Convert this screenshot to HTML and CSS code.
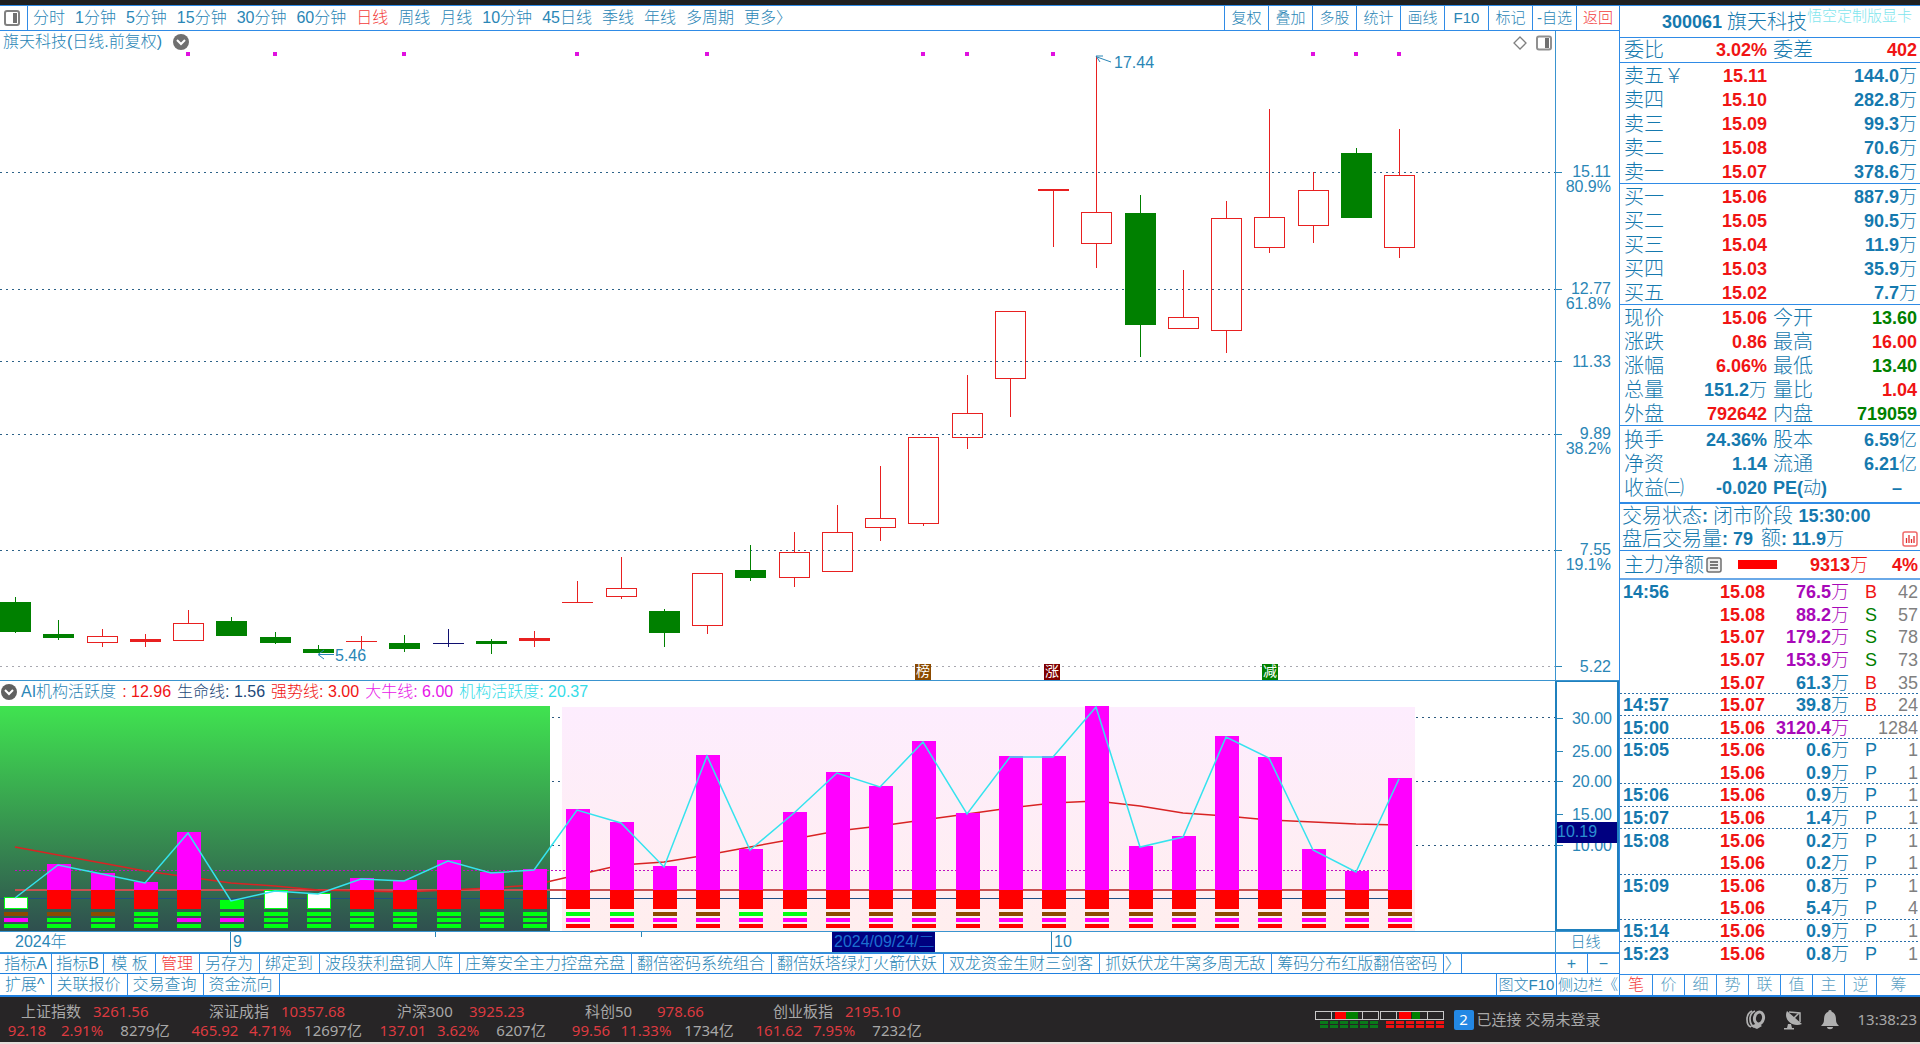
FILE: index.html
```html
<!DOCTYPE html>
<html lang="zh-CN">
<head>
<meta charset="utf-8">
<title>300061 旗天科技 日线</title>
<link rel="stylesheet" href="styles.css">
</head>
<body>
<div class="window-edge"></div>
<main class="workspace">
  <section class="chart-side">
    <nav class="toolbar">
      <button class="panel-toggle" aria-label="侧栏"><svg width="16" height="16" viewBox="0 0 16 16"><rect x="1" y="1" width="14" height="14" rx="2" fill="#fff" stroke="#808080" stroke-width="2"/><rect x="9" y="3" width="4" height="10" fill="#707070"/></svg></button>
      <div class="periods">
        <button>分时</button><button>1分钟</button><button>5分钟</button><button>15分钟</button><button>30分钟</button><button>60分钟</button><button class="active">日线</button><button>周线</button><button>月线</button><button>10分钟</button><button>45日线</button><button>季线</button><button>年线</button><button>多周期</button><button>更多〉</button>
      </div>
      <div class="tools">
        <button>复权</button><button>叠加</button><button>多股</button><button>统计</button><button>画线</button><button>F10</button><button>标记</button><button>-自选</button><button class="active">返回</button>
      </div>
    </nav>

    <div class="pane price-pane">
      <div class="plot">
        <svg id="price" class="canvas" viewBox="0 0 1555 649" preserveAspectRatio="none"></svg>
        <div id="price-notes"></div>
        <div class="plot-title">旗天科技(日线.前复权)
          <svg width="16" height="16" viewBox="0 0 16 16"><circle cx="8" cy="8" r="8" fill="#707070"/><path d="M4 6l4 4 4-4" fill="none" stroke="#fff" stroke-width="2"/></svg>
        </div>
        <div class="plot-icons">
          <svg width="14" height="16" viewBox="0 0 14 16"><path d="M7 2l6 6-6 6-6-6z" fill="none" stroke="#808080" stroke-width="1.3"/></svg>
          <svg width="16" height="16" viewBox="0 0 16 16"><rect x="1" y="1.500" width="14" height="13" rx="2" fill="#fff" stroke="#909090" stroke-width="2"/><rect x="9" y="3" width="4" height="10" fill="#707070"/></svg>
        </div>
      </div>
      <div class="axis" id="price-axis"></div>
    </div>

    <div class="pane indicator-pane">
      <div class="plot">
        <svg id="indicator" class="canvas" viewBox="0 0 1555 250" preserveAspectRatio="none"></svg>
        <div class="legend">
          <svg width="16" height="16" viewBox="0 0 16 16"><circle cx="8" cy="8" r="8" fill="#606060"/><path d="M4 6l4 4 4-4" fill="none" stroke="#fff" stroke-width="2"/></svg>
          <span>AI机构活跃度</span><span class="red">: 12.96</span><span class="navy">生命线: 1.56</span><span class="red">强势线: 3.00</span><span class="magenta">大牛线: 6.00</span><span class="cyan">机构活跃度: 20.37</span>
        </div>
      </div>
      <div class="axis boxed" id="indicator-axis"></div>
    </div>

    <div class="pane date-pane">
      <div class="plot" id="dates"></div>
      <div class="axis cycle">日线</div>
    </div>

    <div class="tabs">
      <button class="short">指标A</button><button class="short">指标B</button><button class="short">模 板</button><button class="active">管理</button><button>另存为</button><button>绑定到</button><button>波段获利盘铜人阵</button><button>庄筹安全主力控盘充盘</button><button>翻倍密码系统组合</button><button>翻倍妖塔绿灯火箭伏妖</button><button>双龙资金生财三剑客</button><button>抓妖伏龙牛窝多周无敌</button><button>筹码分布红版翻倍密码</button><button class="next">〉</button>
      <span class="zoomers"><button>+</button><button>−</button></span>
    </div>
    <div class="tabs extra">
      <button>扩展^</button><button>关联报价</button><button>交易查询</button><button>资金流向</button>
      <span class="sides"><button>图文F10</button><button>侧边栏《</button></span>
    </div>
  </section>

  <aside class="quote">
    <header class="stock"><b>300061</b><span class="name">旗天科技</span><span class="mark">悟空定制版显卡</span></header>
    <table class="book single"><tr><th>委比</th><td class="red">3.02%</td><th>委差</th><td class="red">402</td></tr></table>
    <table class="book">
      <tr><th>卖五￥</th><td class="red">15.11</td><td colspan="2">144.0<i>万</i></td></tr>
      <tr><th>卖四</th><td class="red">15.10</td><td colspan="2">282.8<i>万</i></td></tr>
      <tr><th>卖三</th><td class="red">15.09</td><td colspan="2">99.3<i>万</i></td></tr>
      <tr><th>卖二</th><td class="red">15.08</td><td colspan="2">70.6<i>万</i></td></tr>
      <tr><th>卖一</th><td class="red">15.07</td><td colspan="2">378.6<i>万</i></td></tr>
    </table>
    <table class="book">
      <tr><th>买一</th><td class="red">15.06</td><td colspan="2">887.9<i>万</i></td></tr>
      <tr><th>买二</th><td class="red">15.05</td><td colspan="2">90.5<i>万</i></td></tr>
      <tr><th>买三</th><td class="red">15.04</td><td colspan="2">11.9<i>万</i></td></tr>
      <tr><th>买四</th><td class="red">15.03</td><td colspan="2">35.9<i>万</i></td></tr>
      <tr><th>买五</th><td class="red">15.02</td><td colspan="2">7.7<i>万</i></td></tr>
    </table>
    <table class="book">
      <tr><th>现价</th><td class="red">15.06</td><th>今开</th><td class="green">13.60</td></tr>
      <tr><th>涨跌</th><td class="red">0.86</td><th>最高</th><td class="red">16.00</td></tr>
      <tr><th>涨幅</th><td class="red">6.06%</td><th>最低</th><td class="green">13.40</td></tr>
      <tr><th>总量</th><td>151.2<i>万</i></td><th>量比</th><td class="red">1.04</td></tr>
      <tr><th>外盘</th><td class="red">792642</td><th>内盘</th><td class="green">719059</td></tr>
    </table>
    <table class="book tall">
      <tr><th>换手</th><td>24.36%</td><th>股本</th><td>6.59<i>亿</i></td></tr>
      <tr><th>净资</th><td>1.14</td><th>流通</th><td>6.21<i>亿</i></td></tr>
      <tr><th>收益㈡</th><td>-0.020</td><th class="pe">PE(<i>动</i>)</th><td class="none">–</td></tr>
    </table>
    <div class="session">
      <p>交易状态<b>: </b>闭市阶段 <b>15:30:00</b></p>
      <p>盘后交易量<b>: 79</b><span class="amount">额<b>: 11.9</b><i>万</i></span>
        <svg width="16" height="16" viewBox="0 0 16 16"><rect x="1" y="1" width="14" height="14" rx="2" fill="none" stroke="#f06a6a" stroke-width="1.5"/><path d="M4.500 12V7M7 12V4M9.500 12V8M12 12V5" stroke="#e03030" stroke-width="1.300"/></svg></p>
    </div>
    <div class="netflow">
      <span class="label">主力净额</span>
      <svg width="16" height="16" viewBox="0 0 16 16"><rect x="1" y="1" width="14" height="14" rx="2" fill="#eee" stroke="#707070" stroke-width="1.500"/><path d="M4 5h8M4 8h8M4 11h8" stroke="#505050" stroke-width="1.500"/></svg>
      <span class="bar"></span><b class="flow">9313<i>万</i></b><b class="pct">4%</b>
    </div>
    <table class="ticks">
      <tr><td>14:56</td><td>15.08</td><td class="big">76.5<i>万</i></td><td class="red">B</td><td>42</td></tr>
      <tr><td></td><td>15.08</td><td class="big">88.2<i>万</i></td><td class="green">S</td><td>57</td></tr>
      <tr><td></td><td>15.07</td><td class="big">179.2<i>万</i></td><td class="green">S</td><td>78</td></tr>
      <tr><td></td><td>15.07</td><td class="big">153.9<i>万</i></td><td class="green">S</td><td>73</td></tr>
      <tr><td></td><td>15.07</td><td>61.3<i>万</i></td><td class="red">B</td><td>35</td></tr>
      <tr class="cut"><td>14:57</td><td>15.07</td><td>39.8<i>万</i></td><td class="red">B</td><td>24</td></tr>
      <tr class="cut"><td>15:00</td><td>15.06</td><td class="big">3120.4<i>万</i></td><td></td><td>1284</td></tr>
      <tr class="cut"><td>15:05</td><td>15.06</td><td>0.6<i>万</i></td><td>P</td><td>1</td></tr>
      <tr><td></td><td>15.06</td><td>0.9<i>万</i></td><td>P</td><td>1</td></tr>
      <tr class="cut"><td>15:06</td><td>15.06</td><td>0.9<i>万</i></td><td>P</td><td>1</td></tr>
      <tr class="cut"><td>15:07</td><td>15.06</td><td>1.4<i>万</i></td><td>P</td><td>1</td></tr>
      <tr class="cut"><td>15:08</td><td>15.06</td><td>0.2<i>万</i></td><td>P</td><td>1</td></tr>
      <tr><td></td><td>15.06</td><td>0.2<i>万</i></td><td>P</td><td>1</td></tr>
      <tr class="cut"><td>15:09</td><td>15.06</td><td>0.8<i>万</i></td><td>P</td><td>1</td></tr>
      <tr><td></td><td>15.06</td><td>5.4<i>万</i></td><td>P</td><td>4</td></tr>
      <tr class="cut"><td>15:14</td><td>15.06</td><td>0.9<i>万</i></td><td>P</td><td>1</td></tr>
      <tr class="cut"><td>15:23</td><td>15.06</td><td>0.8<i>万</i></td><td>P</td><td>1</td></tr>
    </table>
    <div class="views">
      <button class="active">笔</button><button>价</button><button>细</button><button>势</button><button>联</button><button>值</button><button>主</button><button>逆</button><button>筹</button>
    </div>
  </aside>
</main>

<footer class="status">
  <div class="index"><span class="title">上证指数</span><em class="last">3261.56</em><em>92.18</em><em>2.91%</em><span>8279亿</span></div>
  <div class="index"><span class="title">深证成指</span><em class="last">10357.68</em><em>465.92</em><em>4.71%</em><span>12697亿</span></div>
  <div class="index"><span class="title">沪深300</span><em class="last">3925.23</em><em>137.01</em><em>3.62%</em><span>6207亿</span></div>
  <div class="index"><span class="title">科创50</span><em class="last">978.66</em><em>99.56</em><em>11.33%</em><span>1734亿</span></div>
  <div class="index"><span class="title">创业板指</span><em class="last">2195.10</em><em>161.62</em><em>7.95%</em><span>7232亿</span></div>
  <div class="link">
    <svg width="130" height="20" viewBox="0 0 130 20" shape-rendering="crispEdges">
      <rect x="20" y="2" width="11" height="7" fill="#f00"/><rect x="31" y="2" width="12" height="7" fill="#008000"/>
      <path d="M.5 1.500h63v8H.5zM16 2v7M47.500 2v7" fill="none" stroke="#c8c8c8"/>
      <rect x="84" y="2" width="12" height="7" fill="#f00"/><rect x="97" y="2" width="8" height="7" fill="#008000"/>
      <path d="M65.500 1.500h63v8h-63zM81 2v7M112.500 2v7" fill="none" stroke="#c8c8c8"/>
      <path d="M5 12.500h59M5 16.500h59" stroke="#0a7a1a" stroke-width="3" stroke-dasharray="8 2"/>
      <path d="M71 12.500h58M71 16.500h58" stroke="#f01010" stroke-width="3" stroke-dasharray="8 2"/>
    </svg>
    <span class="count">2</span><span>已连接 交易未登录</span>
  </div>
  <div class="tray">
    <svg width="20" height="20" viewBox="0 0 20 20"><path d="M6 1C-1 4 0 15 5 17M9 1C2 4 3 14 8 17" fill="none" stroke="#b0b0b0" stroke-width="1.700"/><ellipse cx="13" cy="8" rx="4.500" ry="6" transform="rotate(12 13 8)" fill="none" stroke="#b0b0b0" stroke-width="3"/><path d="M4 16l7 3 5-3-4-3z" fill="#b0b0b0"/></svg>
    <svg width="20" height="20" viewBox="0 0 20 20"><path d="M4 1c-4 8 5 17 15 13zM5 14l3 0 1 4h2v1.500H1V18h3z" fill="#b0b0b0"/><path d="M11 8l5-5M6 2l11 1v9" fill="none" stroke="#b0b0b0" stroke-width="1.500"/></svg>
    <svg width="20" height="20" viewBox="0 0 20 20"><path d="M10 0c1.200 0 1.700 1 1.700 1.800C15.500 3 16 7 16 10c0 3 1.500 4 3 6H1c1.500-2 3-3 3-6 0-3 .5-7 4.300-8.200C8.300 1 8.800 0 10 0zM7 17h6c0 3-6 3-6 0z" fill="#b0b0b0"/></svg>
    <time>13:38:23</time>
  </div>
</footer>
<div class="window-foot"></div>
<script src="chart.js"></script>
</body>
</html>
```
FILE: styles.css
```css
* { box-sizing: border-box; }
body {
  margin: 0;
  min-height: 100vh;
  display: flex;
  flex-direction: column;
  background: #fff;
  color: #2a86b6;
  font: 300 16px/20px "Liberation Sans", "Noto Sans CJK SC", sans-serif;
  text-spacing-trim: space-all;
}
button {
  margin: 0;
  padding: 0;
  border: 0;
  background: none;
  color: inherit;
  font: inherit;
  white-space: nowrap;
}
i, em { font-style: normal; }
i { font-weight: 300; }
b { font-weight: 700; }
svg { display: block; }
.red { color: #f01414; }
.green { color: #008000; }
.navy { color: #1d4878; }
.magenta { color: #e815e8; }
.cyan { color: #35dce8; }
button.active { color: #f23c3c; }

.window-edge { height: 5px; background: #202020; }
.window-foot { height: 2px; background: #e6dedb; }
.workspace {
  flex: 1;
  display: grid;
  grid-template-columns: minmax(0, 1fr) 301px;
}
.chart-side {
  display: grid;
  grid-template-rows: 26px minmax(0, 650fr) minmax(0, 251fr) 21px 21px 23px;
  min-width: 0;
}

/* period and tool bar */
.toolbar {
  display: flex;
  border-top: 1px solid #2f8be6;
  border-bottom: 1px solid #2f8be6;
}
.panel-toggle {
  width: 28px;
  padding-left: 4px;
  border-right: 1px solid #2f8be6;
}
.periods { display: flex; gap: 10px; padding-left: 5px; flex: 1; }
.tools { display: grid; grid-template-columns: repeat(8, 44px) 43px; }
.tools button { border-left: 1px solid #2f8be6; font-size: 15px; }

/* panes */
.pane {
  display: grid;
  grid-template-columns: minmax(0, 1fr) 64px;
  border-bottom: 1px solid #3a94cf;
}
.plot { position: relative; overflow: hidden; }
.canvas { position: absolute; inset: 0; width: 100%; height: 100%; }
.axis { position: relative; border-left: 1px solid #3a94cf; }
.boxed { border: 2px solid #1f80bd; border-top-width: 1px; }
.plot-title {
  position: absolute;
  top: 1px;
  left: 3px;
  display: flex;
  align-items: center;
  gap: 11px;
}
.plot-icons {
  position: absolute;
  top: 4px;
  right: 3px;
  display: flex;
  gap: 9px;
}
.legend {
  position: absolute;
  top: 1px;
  left: 1px;
  display: flex;
  align-items: center;
  gap: 6px;
}
.legend svg { margin-right: -2px; }
.scale {
  position: absolute;
  right: 8px;
  transform: translateY(-50%);
  line-height: 15px;
  text-align: right;
}
.boxed .scale { right: 5px; }
.scale.pair { transform: translateY(-8px); }
.scale-tick {
  position: absolute;
  left: 0;
  width: 6px;
  height: 1px;
  background: #2a86b6;
}
.cursor {
  position: absolute;
  left: 0;
  right: 0;
  height: 21px;
  background: #000080;
  color: #2a8fd0;
}
.note { position: absolute; transform: translateY(-50%); }
.flag {
  position: absolute;
  width: 16px;
  height: 16px;
  transform: translate(-50%, -50%);
  color: #fff;
  font-size: 14px;
  font-weight: 400;
  line-height: 15px;
  text-align: center;
}
.date { position: absolute; top: 0; height: 20px; }
.date.month { border-left: 1px solid #2a86b6; padding-left: 2px; }
.date.mark { height: 5px; border-left: 1px solid #2a86b6; }
.date.current { width: 103px; padding-left: 2px; background: #000080; color: #1c6fd0; }
.cycle { font-size: 15px; text-align: center; padding-right: 4px; }

/* template tabs */
.tabs { display: flex; border-bottom: 1px solid #1f80e0; border-top: 1px solid #2f8be6; }
.tabs button { padding: 0 6px 0 5px; border-right: 1px solid #2f8be6; line-height: 19px; }
.tabs .short { width: 52px; padding: 0; }
.tabs .next { width: 18px; padding: 0; }
.extra { border-top: 0; border-bottom-width: 2px; }
.zoomers, .sides { margin-left: auto; display: flex; }
.tabs .zoomers button { width: 32px; padding: 0; border-right: 0; border-left: 1px solid #2f8be6; }
.tabs .sides button { width: 63px; padding: 0; border-right: 0; border-left: 1px solid #2f8be6; font-size: 15px; }
.tabs .sides button:first-child { width: 60px; }

/* quote column */
.quote {
  display: flex;
  flex-direction: column;
  border-left: 1px solid #2f8be6;
  color: #1579ae;
  font-size: 18px;
  line-height: 24px;
}
.stock {
  display: flex;
  align-items: center;
  height: 33px;
  padding-left: 42px;
  border-top: 1px solid #2f8be6;
  border-bottom: 1px solid #2f8be6;
  white-space: nowrap;
}
.name { font-size: 20px; padding-left: 5px; }
.mark { font-size: 15px; align-self: flex-start; line-height: 20px; color: #7fe6ee; }
.book {
  width: 100%;
  table-layout: fixed;
  border-collapse: separate;
  border-spacing: 0;
  border-bottom: 1px solid #2f8be6;
}
.book td, .book th { height: 24px; padding: 2px 0 0; line-height: 22px; font-size: 18px; white-space: nowrap; }
.single td, .single th { padding-top: 0; line-height: 24px; }
.book td { text-align: right; font-weight: bold; padding-right: 3px; }
.book td:nth-child(2) { padding-right: 0; width: 84px; }
.book th { text-align: left; font-weight: 300; font-size: 20px; width: 63px; padding-left: 4px; }
.book th:nth-child(3) { width: 60px; padding-left: 6px; }
.book .pe { font-weight: bold; font-size: 18px; }
.book .none { padding-right: 18px; }
.tall { padding: 1px 0 3px; }
.session { padding: 0 2px; border-top: 1px solid #2f8be6; border-bottom: 1px solid #2f8be6; font-size: 20px; }
.session p { margin: 0; display: flex; align-items: center; height: 23px; white-space: pre; }
.session b, .session i { font-size: 18px; }
.session svg { margin-left: auto; }
.amount { padding-left: 8px; }
.netflow { display: flex; align-items: center; height: 29px; padding: 0 2px 0 4px; border-bottom: 2px solid #6aa9e8; color: #f01414; }
.label { font-size: 20px; color: #1579ae; padding-right: 2px; }
.bar { width: 39px; height: 9px; margin-left: 16px; background: #f00; }
.flow { margin-left: 33px; }
.pct { margin-left: auto; }
.ticks {
  flex: 1;
  width: 100%;
  table-layout: fixed;
  border-spacing: 0;
  margin-bottom: 10px;
}
.ticks td { padding: 2px 0 0; line-height: 20px; text-align: right; font-weight: bold; white-space: nowrap; }
.ticks td:nth-child(1) { width: 60px; text-align: left; padding-left: 3px; }
.ticks td:nth-child(2) { width: 85px; color: #f01414; }
.ticks td:nth-child(3) { width: 84px; }
.ticks td:nth-child(4) { width: 28px; font-weight: 400; }
.ticks td:nth-child(5) { color: #808080; font-weight: 400; padding-right: 2px; }
.ticks .big { color: #a808b8; }
.cut { background: repeating-linear-gradient(90deg, #2a6fa8 0 2px, transparent 2px 4px) 0 0 / 100% 1px no-repeat; }
.views { display: grid; grid-template-columns: repeat(8, 32px) 1fr; height: 23px; border-top: 1px solid #2f8be6; border-bottom: 2px solid #1f80e0; font-size: 16px; line-height: 20px; }
.views button + button { border-left: 1px solid #2f8be6; color: #5a9fc4; }

/* status bar */
.status {
  display: flex;
  height: 45px;
  background: #272526;
  color: #a8a8a8;
  font: 15px/19px "Noto Sans", "Noto Sans CJK SC", sans-serif;
}
.index {
  width: 188px;
  display: grid;
  grid-template-columns: 54px 28px 28px 70px;
  grid-template-rows: 19px 19px;
  padding-top: 5px;
  text-align: center;
  white-space: nowrap;
}
.index em { color: #dc3a40; }
.index .title { grid-column: 1 / 3; text-align: left; padding-left: 21px; }
.index .last { grid-column: 3 / 5; text-align: left; padding-left: 11px; }
.index em:nth-child(3) { grid-column: 1; }
.index em:nth-child(4) { grid-column: 2 / 4; }
.link { display: flex; align-items: center; margin-left: auto; padding-right: 146px; }
.count { width: 20px; height: 20px; margin: 0 3px 0 9px; border-radius: 2px; background: #2388e4; color: #fff; text-align: center; }
.tray { display: flex; align-items: center; gap: 17px; padding-right: 3px; }
```
FILE: chart.js
```js
// Candle: [kind, body top, body bottom, wick top, wick bottom]; g = falling, r = rising, f = rising filled, n = flat
const candles = [
  ['g',602,631,597,633],['g',634,637,620,640],['r',636,642,629,647],['f',639,641,634,647],['r',623,640,610,640],
  ['g',621,635,617,636],['g',637,642,632,644],['g',649,652,645,653],['f',641,641,636,649],['g',643,648,635,652],
  ['n',643,643,629,647],['g',641,643,639,654],['f',638,640,631,647],['f',602,602,581,603],['r',588,596,557,599],
  ['g',611,632,609,647],['r',573,625,573,634],['g',570,577,545,581],['r',552,577,532,587],['r',532,571,505,571],
  ['r',518,527,466,541],['r',437,523,437,526],['r',413,437,375,449],['r',311,378,311,417],['f',189,190,189,247],
  ['r',212,243,56,268],['g',213,324,195,357],['r',317,328,270,328],['r',218,330,201,353],['r',217,247,109,253],
  ['r',190,225,172,243],['g',153,217,148,218],['r',175,247,129,258]
];
// Top edge of each activity bar and its three status stripes
const bars = [897,864,873,882,832,900,890,893,878,880,860,872,869,809,822,866,755,849,812,772,786,741,813,756,756,706,846,836,736,757,849,871,778];
const stripes = ['bml','bll','bll','lll','lml','lml','lll','lll','lll','lll','lll','lll','lll','lmr','lmr','bmr','bmr','lmr','lmr'];
const average = [847,855,863,871,877,883,886,890,891,892,890,888,885,875,865,862,855,847,839,831,826,820,814,808,803,801,806,813,816,820,822,824,825];
const colours = { b: '#8b4a00', m: '#f0f', l: '#0f1', r: '#f00' };
const PRICE_TOP = 31, IND_TOP = 681;
const cx = i => Math.round(15 + i * 43.25);
const $ = id => document.getElementById(id);
const rect = (x, y, w, h, fill, more = '') => `<rect x="${x}" y="${y}" width="${w}" height="${h}" fill="${fill}" ${more}/>`;
const line = (x1, y1, x2, y2, stroke, more = '') => `<path d="M${x1} ${y1}L${x2} ${y2}" stroke="${stroke}" fill="none" ${more}/>`;

// Price pane
let s = '<g shape-rendering="crispEdges">';
[172, 289, 361, 434, 550, 666].forEach(y => {
  s += line(0, y - PRICE_TOP + .5, 1555, y - PRICE_TOP + .5, y === 666 ? '#a8a8b0' : '#2c6288', 'stroke-dasharray="2 4"');
});
candles.forEach(([k, t, b, wt, wb], i) => {
  const x = cx(i), c = { g: '#008000', n: '#101070' }[k] || '#e82020';
  t -= PRICE_TOP; b -= PRICE_TOP; wt -= PRICE_TOP; wb -= PRICE_TOP;
  if (wt < t) s += rect(x, wt, 1, t - wt, c);
  if (wb > b) s += rect(x, b, 1, wb - b, c);
  s += k === 'r'
    ? rect(x - 14.5, t + .5, 30, b - t, 'none', `stroke="${c}"`)
    : rect(x - 15, t, 31, b - t + 1, c);
});
[4, 6, 9, 13, 16, 21, 22, 24, 30, 31, 32].forEach(i => { s += rect(cx(i) - 2, 52 - PRICE_TOP, 4, 4, '#e010e0'); });
s += '</g>';
s += line(1097, 26, 1111, 31, '#2a86b6') + '<path d="M1100 31L1096 25L1103 25" stroke="#2a86b6" fill="none"/>';
s += line(319, 623.5, 334, 623.5, '#2a86b6') + '<path d="M324 619L318 623.500L324 628" stroke="#2a86b6" fill="none"/>';
$('price').innerHTML = s;

const pos = (x, y) => `left:${x / 15.55}%;top:${(y - PRICE_TOP) / 6.49}%`;
$('price-notes').innerHTML =
  `<span class="note" style="${pos(1114, 63)}">17.44</span><span class="note" style="${pos(335, 656)}">5.46</span>` +
  [['榜', 923, '#8b4a00'], ['涨', 1052, '#800000'], ['减', 1270, '#008000']]
    .map(([t, x, c]) => `<span class="flag" style="${pos(x, 672)};background:${c}">${t}</span>`).join('');

$('price-axis').innerHTML = [['15.11', 172, '80.9%'], ['12.77', 289, '61.8%'], ['11.33', 361], ['9.89', 434, '38.2%'], ['7.55', 550, '19.1%'], ['5.22', 666]]
  .map(([v, y, p]) => {
    const top = `top:${(y - PRICE_TOP) / 6.49}%`;
    return `<span class="scale-tick" style="${top}"></span><span class="scale${p ? ' pair' : ''}" style="${top}">${v}${p ? '<br>' + p : ''}</span>`;
  }).join('');

// Indicator pane
s = '<defs><linearGradient id="weak" x2="0" y2="1"><stop stop-color="#40e350"/><stop offset="1" stop-color="#2f4f4f"/></linearGradient>' +
  '<linearGradient id="strong" x2="0" y2="1"><stop stop-color="#fdedfe"/><stop offset="1" stop-color="#ffeeee"/></linearGradient></defs><g shape-rendering="crispEdges">';
[717, 781, 845].forEach(y => { s += line(0, y - IND_TOP + .5, 1555, y - IND_TOP + .5, '#2c5a80', 'stroke-dasharray="2 4"'); });
s += rect(0, 25, 550, 225, 'url(#weak)') + rect(550, 25, 1, 225, '#fff') + rect(562, 26, 853, 224, 'url(#strong)');
s += line(15, 189.5, 1399, 189.5, '#c010c0', 'stroke-dasharray="2 2"');
s += line(15, 209, 1399, 209, '#c85050', 'stroke-width="2"') + line(0, 217.5, 1399, 217.5, '#1f4f86') + '</g>';
s += `<polyline fill="none" stroke="#d82424" stroke-width="1.5" points="${average.map((y, i) => cx(i) + ',' + (y - IND_TOP)).join(' ')}"/>`;
s += '<g shape-rendering="crispEdges">';
bars.forEach((top, i) => {
  const x = cx(i) - 11, y = top - IND_TOP;
  if (i === 5) s += rect(x, y, 24, 228 - y, '#0f1');
  else if (i === 0 || i === 6 || i === 7) s += rect(x + .5, y + .5, 23, 227 - y, '#fff', 'stroke="#0f1"');
  else s += rect(x, y, 24, 209 - y, '#f0f') + rect(x, 209, 24, 19, '#f00');
  [...(stripes[i] || 'bmr')].forEach((c, n) => { s += rect(x, 231 + n * 6, 24, 4, colours[c]); });
});
s += '</g>';
s += `<polyline fill="none" stroke="#35e3ee" stroke-width="1.5" points="${bars.map((y, i) => cx(i) + ',' + (y - IND_TOP + 1)).join(' ')}"/>`;
$('indicator').innerHTML = s;

const itop = y => `top:${(y - IND_TOP) / 2.5}%`;
$('indicator-axis').innerHTML = [['30.00', 717], ['25.00', 751], ['20.00', 781], ['15.00', 815], ['10.00', 846]]
  .map(([v, y]) => `<span class="scale-tick" style="${itop(y)}"></span><span class="scale" style="${itop(y)}">${v}</span>`).join('') +
  `<span class="cursor" style="${itop(823)}">10.19</span>`;

// Date axis
const dates = [[15, '', '2024年'], [230, 'month', '9'], [435, 'mark', ''], [641, 'mark', ''], [832, 'current', '2024/09/24/二'], [1051, 'month', '10']];
$('dates').innerHTML = dates.map(([x, c, t]) => `<span class="date ${c}" style="left:${x / 15.55}%">${t}</span>`).join('');
```
